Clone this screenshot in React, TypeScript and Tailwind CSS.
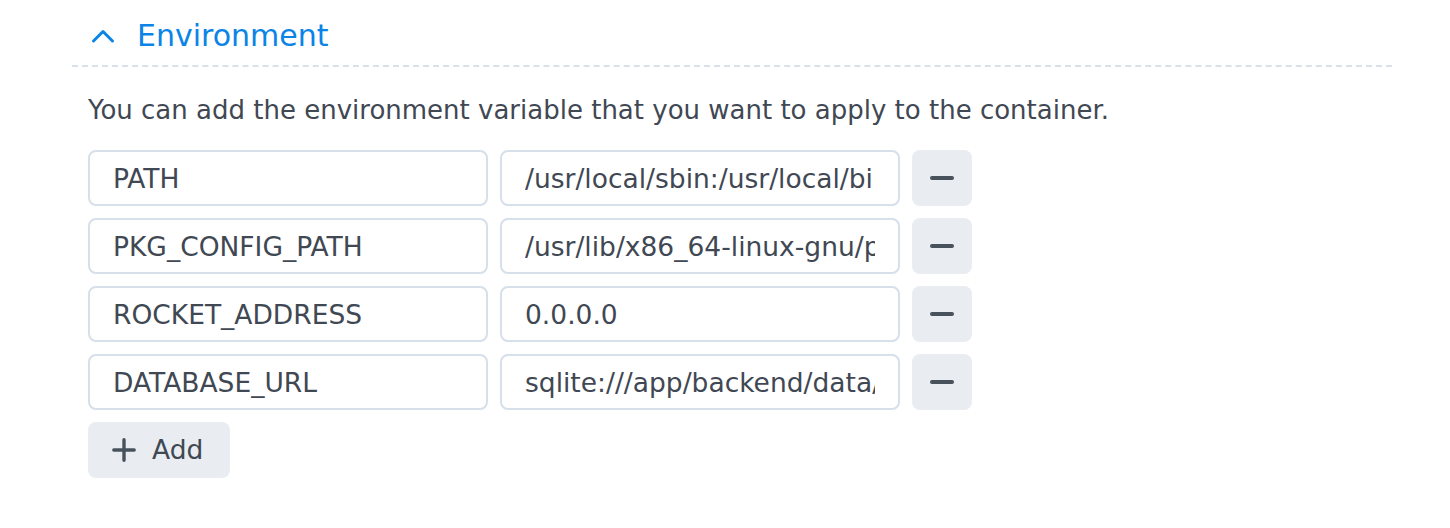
type EnvVar = {
  name: string;
  value: string;
};

const envVars: EnvVar[] = [
  { name: "PATH", value: "/usr/local/sbin:/usr/local/bin:/usr/sbin:/usr/bin:/sbin:/bin" },
  { name: "PKG_CONFIG_PATH", value: "/usr/lib/x86_64-linux-gnu/pkgconfig" },
  { name: "ROCKET_ADDRESS", value: "0.0.0.0" },
  { name: "DATABASE_URL", value: "sqlite:///app/backend/data/db.sqlite" },
];

const inputCls =
  "h-14 w-[400px] rounded-lg border-2 border-[#d6dfea] bg-white px-[23px] text-[26.5px] text-[#3f4853] outline-none";

const EnvRow = ({ item }: { item: EnvVar }) => {
  return (
    <div className="flex items-center gap-3">
      <input readOnly value={item.name} className={inputCls} />
      <input readOnly value={item.value} className={inputCls} />
      <button className="flex h-14 w-[60px] items-center justify-center rounded-lg bg-[#e9edf1]">
        <span className="h-[3.5px] w-6 rounded-full bg-[#48525c]" />
      </button>
    </div>
  );
};

export default function App() {
  return (
    <div className="h-[528px] w-[1450px] overflow-hidden bg-white pl-[72px] pr-[58px] font-['DejaVu_Sans',sans-serif] text-[#3f4853]">
      <div className="flex items-center gap-[22px] border-b-2 border-dashed border-[#d8e0ea] pb-[11px] pl-[19px] pt-[18px] text-[30px] leading-[36px] text-[#0a84e6]">
        <svg width="24" height="16" viewBox="0 0 24 16" fill="none">
          <path
            d="M2.5 13 12 3.5l9.5 9.5"
            stroke="currentColor"
            strokeWidth="3"
            strokeLinecap="round"
            strokeLinejoin="round"
          />
        </svg>
        <span>Environment</span>
      </div>
      <div className="pl-4">
        <p className="mt-[27px] text-[26px] leading-[32px]">
          You can add the environment variable that you want to apply to the container.
        </p>
        <div className="mt-[24px] flex flex-col gap-3">
          {envVars.map((item) => (
            <EnvRow key={item.name} item={item} />
          ))}
        </div>
        <button className="mt-[12px] flex h-14 w-[142px] items-center gap-[16px] rounded-lg bg-[#e9edf1] pl-[24px] text-[26.5px] text-[#3f4853]">
          <svg width="24" height="24" viewBox="0 0 24 24" fill="none">
            <path
              d="M12 1.8v20.4M1.8 12h20.4"
              stroke="#48525c"
              strokeWidth="3.4"
              strokeLinecap="round"
            />
          </svg>
          <span>Add</span>
        </button>
      </div>
    </div>
  );
}
